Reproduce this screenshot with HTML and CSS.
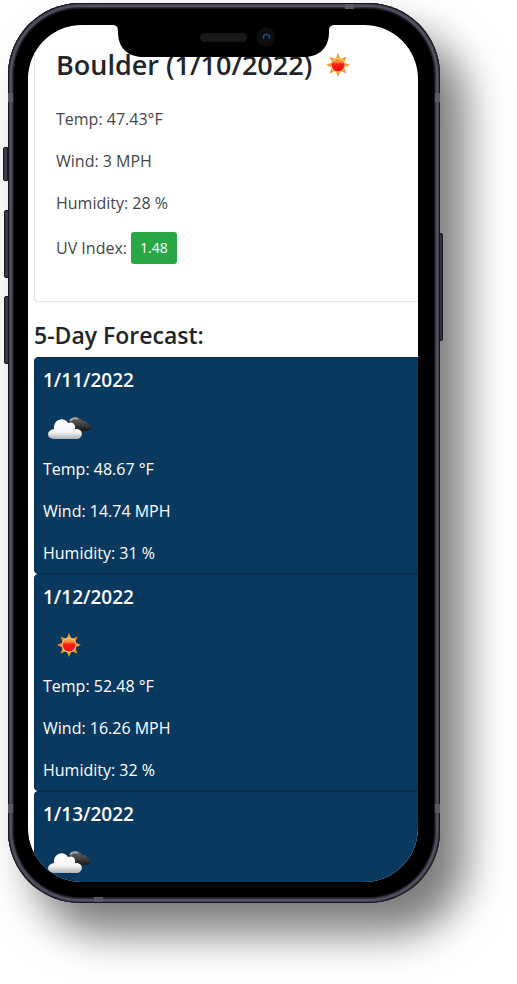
FILE: index.html
```html
<!DOCTYPE html>
<html lang="en">
<head>
<meta charset="utf-8">
<meta name="viewport" content="width=device-width, initial-scale=1">
<title>Weather Dashboard</title>
<link rel="stylesheet" href="styles.css">
</head>
<body>
<svg class="defs" aria-hidden="true">
  <defs>
    <linearGradient id="sunFill" x1="0" y1="0" x2="0" y2="1">
      <stop offset="0" stop-color="#ffb340"/><stop offset=".3" stop-color="#fb7a30"/><stop offset=".42" stop-color="#f92018"/><stop offset="1" stop-color="#ff0800"/>
    </linearGradient>
    <linearGradient id="cloudFill" x1="0" y1="0" x2="0" y2="1">
      <stop offset="0" stop-color="#fff"/><stop offset=".65" stop-color="#f4f4f4"/><stop offset="1" stop-color="#b0b0b0"/>
    </linearGradient>
    <linearGradient id="darkFill" x1="0" y1="0" x2="0" y2="1">
      <stop offset="0" stop-color="#666"/><stop offset=".4" stop-color="#4b4b4b"/><stop offset="1" stop-color="#181818"/>
    </linearGradient>
    <symbol id="sun" viewBox="0 0 24 24">
      <g fill="#f79a1c">
        <path id="ray" d="M12 0l2.500 6h-5z"/>
        <use href="#ray" transform="rotate(45 12 12)"/>
        <use href="#ray" transform="rotate(90 12 12)"/>
        <use href="#ray" transform="rotate(135 12 12)"/>
        <use href="#ray" transform="rotate(180 12 12)"/>
        <use href="#ray" transform="rotate(225 12 12)"/>
        <use href="#ray" transform="rotate(270 12 12)"/>
        <use href="#ray" transform="rotate(315 12 12)"/>
      </g>
      <circle cx="12" cy="12" r="7.500" fill="#f6cf91"/>
      <circle cx="12" cy="12" r="6.500" fill="url(#sunFill)"/>
    </symbol>
    <symbol id="clouds" viewBox="0 0 52 52">
      <path fill="url(#darkFill)" d="M27 19c1-5 10-5 12 0 3-1 5 1 5 3 5 0 5 7 0 7H30z"/>
      <path fill="none" stroke="#a4a4a4" stroke-width="2" d="M27 19a6 6 0 0 1 8-2"/>
      <path fill="url(#cloudFill)" d="M11 37c-8 0-8-9 0-10-1-10 10-13 14-6 5-2 8 2 7 6 9-1 9 10 1 10z"/>
    </symbol>
  </defs>
</svg>
<div class="phone">
  <span class="key key-mute"></span>
  <span class="key key-up"></span>
  <span class="key key-down"></span>
  <span class="key key-power"></span>
  <span class="band band-top"></span>
  <span class="band band-bottom"></span>
  <span class="band band-side band-left-high"></span>
  <span class="band band-side band-right-high"></span>
  <span class="band band-side band-left-low"></span>
  <span class="band band-side band-right-low"></span>
  <main class="screen">
    <section class="current">
      <h1>Boulder (1/10/2022) <svg class="sun" role="img" aria-label="Clear sky"><use href="#sun"/></svg></h1>
      <p>Temp: 47.43°F</p>
      <p>Wind: 3 MPH</p>
      <p>Humidity: 28 %</p>
      <p class="uv"><label for="uv">UV Index:</label> <button id="uv" type="button">1.48</button></p>
    </section>
    <h2>5-Day Forecast:</h2>
    <article class="day">
      <h3>1/11/2022</h3>
      <svg class="clouds" role="img" aria-label="Broken clouds"><use href="#clouds"/></svg>
      <div class="facts"><p>Temp: 48.67 °F</p><p>Wind: 14.74 MPH</p><p>Humidity: 31 %</p></div>
    </article>
    <article class="day">
      <h3>1/12/2022</h3>
      <div class="sun-box"><svg class="sun" role="img" aria-label="Clear sky"><use href="#sun"/></svg></div>
      <div class="facts"><p>Temp: 52.48 °F</p><p>Wind: 16.26 MPH</p><p>Humidity: 32 %</p></div>
    </article>
    <article class="day">
      <h3>1/13/2022</h3>
      <svg class="clouds" role="img" aria-label="Broken clouds"><use href="#clouds"/></svg>
    </article>
  </main>
  <svg class="notch" viewBox="112 24 223 34" aria-hidden="true">
    <path d="M112 24v1c5 0 6 2 6 7 0 16 10 25 25 25h161c15 0 25-9 25-25 0-5 1-7 6-7v-1z"/>
    <rect x="200" y="33" width="47" height="9" rx="4.500" fill="#191919"/>
    <circle cx="266" cy="37" r="9.500" fill="#0d0d10"/>
    <path d="M264 39a3 3 0 1 1 5 0" fill="none" stroke="#234f91" stroke-width="1.300"/>
  </svg>
</div>
</body>
</html>
```
FILE: styles.css
```css
* { box-sizing: border-box; }
body {
  margin: 0;
  padding: 3px 77px 80px 8px;
  background: #fff;
  color: #212529;
  font: 16px/26px "Open Sans", "Noto Sans", sans-serif;
}
h1, h2, h3, p { margin: 0; }
.defs { position: absolute; width: 0; height: 0; }

.phone {
  position: relative;
  aspect-ratio: 432 / 900;
  padding: 22px 22px 21px 20px;
  border-radius: 72px;
  background: #000;
  box-shadow:
    inset 0 0 0 1px #17171d,
    inset 0 0 0 2px #42414d,
    inset 0 0 0 4px #505060,
    inset 0 0 0 5px #30303b,
    inset 0 0 0 6px #181820,
    25px 30px 42px rgba(0, 0, 0, .5),
    24px 32px 60px rgba(0, 0, 0, .04);
}
.screen {
  height: 100%;
  overflow: hidden;
  padding: 0 0 0 6px;
  border-radius: 54px;
  background: #fff;
}
.notch {
  position: absolute;
  top: 21px;
  left: 50%;
  width: 223px;
  height: 34px;
  margin-left: -112px;
}

.key {
  position: absolute;
  left: -5px;
  width: 5px;
  border: 1px solid #15151c;
  border-radius: 2px 0 0 2px;
  background: #3b3c48;
}
.key-mute { top: 16%; height: 34px; }
.key-up { top: 23%; height: 68px; left: -4px; }
.key-down { top: 32.600%; height: 68px; left: -4px; }
.key-power {
  top: 25.600%;
  right: -3px;
  left: auto;
  width: 4px;
  height: 108px;
  border-radius: 0 2px 2px 0;
  background: #30323b;
}
.band { position: absolute; width: 9px; height: 5px; background: #5d5963; }
.band-top { top: 1px; left: 78%; }
.band-bottom { bottom: 1px; left: 20%; }
.band-side { width: 5px; height: 9px; }
.band-left-high { top: 10%; left: 0; }
.band-right-high { top: 10%; right: 0; }
.band-left-low { top: 89%; left: 0; }
.band-right-low { top: 89%; right: 0; }

.current {
  display: flex;
  flex-direction: column;
  gap: 16px;
  margin-right: -8px;
  padding: 22px 21px 37px;
  border: 1px solid #e3e3e3;
  border-top: 0;
  border-radius: 0 0 4px 4px;
  color: #43474b;
}
h1 {
  display: flex;
  align-items: center;
  gap: 14px;
  margin-bottom: 7px;
  color: #212529;
  font-size: 27px;
  font-weight: 600;
  line-height: 36px;
  white-space: nowrap;
}
.sun { flex: none; width: 24px; height: 24px; }
.uv { display: flex; align-items: center; gap: 4px; }
button {
  height: 32px;
  padding: 0 9px;
  border: 0;
  border-radius: 3px;
  background: #28a745;
  color: #fff;
  font: inherit;
  font-size: 14px;
}
h2 {
  margin: 18px 0 6px;
  font-size: 23px;
  font-weight: 600;
  line-height: 31px;
}
.day {
  margin-right: -8px;
  padding: 9px 9px 7px 8px;
  border: 1px solid #082f50;
  border-radius: 4px;
  background: #0a3960;
  color: #fff;
}
h3 { font-size: 19px; font-weight: 600; line-height: 26px; }
.clouds { display: block; width: 52px; height: 52px; margin: 9px 0 2px; }
.sun-box { display: grid; place-items: center; width: 52px; height: 52px; margin: 9px 0 2px; }
.facts { display: grid; gap: 16px; }
```
